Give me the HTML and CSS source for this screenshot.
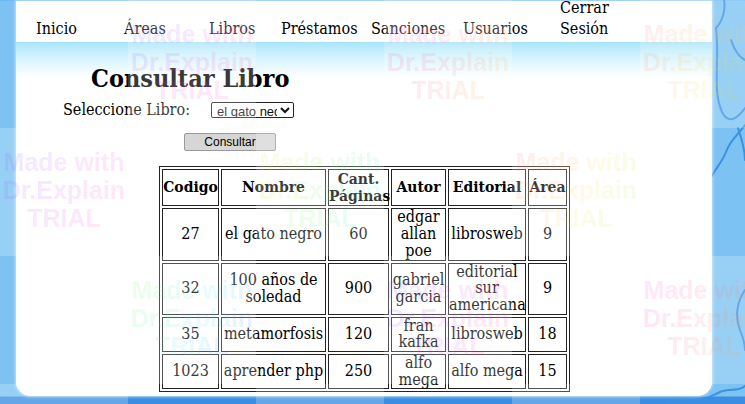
FILE: index.html
```html
<!DOCTYPE html>
<html lang="es">
<head>
<meta charset="utf-8">
<title>Consultar Libro</title>
<link rel="stylesheet" href="styles.css">
</head>
<body>
<svg class="veins" width="745" height="404" viewBox="0 0 745 404" aria-hidden="true">
  <path d="M716 28 C720 60 712 90 722 112 C728 124 736 120 745 108"/>
  <path d="M731 40 C735 52 741 58 745 60"/>
  <path d="M724 0 C726 10 722 22 716 28"/>
  <path d="M745 125 C738 135 730 140 726 152 C722 162 716 168 712 176"/>
  <path d="M738 128 C742 140 745 150 745 160"/>
  <path d="M745 290 C738 300 734 315 740 330 C744 340 745 345 745 350"/>
  <path d="M700 404 C704 398 712 396 720 392 C730 388 738 392 745 386"/>
  <path d="M668 404 C672 400 680 398 688 399"/>
</svg>

<div class="page">
  <nav class="nav">
    <a class="nav-item">Inicio</a>
    <a class="nav-item">Áreas</a>
    <a class="nav-item">Libros</a>
    <a class="nav-item">Préstamos</a>
    <a class="nav-item">Sanciones</a>
    <a class="nav-item">Usuarios</a>
    <a class="nav-item nav-last">Cerrar Sesión</a>
  </nav>

  <main class="content">
    <h1 class="title">Consultar Libro</h1>
    <div class="select-row">
      <label class="select-label">Seleccione Libro:</label>
      <select class="book-select">
        <option>el gato negro</option>
        <option>100 años de soledad</option>
        <option>metamorfosis</option>
        <option>aprender php</option>
      </select>
    </div>
    <div class="button-row">
      <button class="btn">Consultar</button>
    </div>

    <table class="books">
      <colgroup>
        <col class="c-cod"><col class="c-nom"><col class="c-pag"><col class="c-aut"><col class="c-edi"><col class="c-area">
      </colgroup>
      <thead>
        <tr><th>Codigo</th><th>Nombre</th><th>Cant. Páginas</th><th>Autor</th><th>Editorial</th><th>Área</th></tr>
      </thead>
      <tbody>
        <tr><td>27</td><td>el gato negro</td><td>60</td><td>edgar allan poe</td><td>librosweb</td><td>9</td></tr>
        <tr><td>32</td><td>100 años de soledad</td><td>900</td><td>gabriel garcia</td><td>editorial sur americana</td><td>9</td></tr>
        <tr><td>35</td><td>metamorfosis</td><td>120</td><td>fran kafka</td><td>librosweb</td><td>18</td></tr>
        <tr><td>1023</td><td>aprender php</td><td>250</td><td>alfo mega</td><td>alfo mega</td><td>15</td></tr>
      </tbody>
    </table>
  </main>
</div>

<div class="wm t-1-0 h1"><span>Made with<br>Dr.Explain<br>TRIAL</span></div>
<div class="wm t-3-0 h2"><span>Made with<br>Dr.Explain<br>TRIAL</span></div>
<div class="wm t-5-0 h3"><span>Made with<br>Dr.Explain<br>TRIAL</span></div>
<div class="wm t-0-1 h1"><span>Made with<br>Dr.Explain<br>TRIAL</span></div>
<div class="wm t-2-1 h4"><span>Made with<br>Dr.Explain<br>TRIAL</span></div>
<div class="wm t-4-1 h3"><span>Made with<br>Dr.Explain<br>TRIAL</span></div>
<div class="wm t-1-2 h5"><span>Made with<br>Dr.Explain<br>TRIAL</span></div>
<div class="wm t-3-2 h1"><span>Made with<br>Dr.Explain<br>TRIAL</span></div>
<div class="wm t-5-2 h2"><span>Made with<br>Dr.Explain<br>TRIAL</span></div>
<div class="wm t-0-3 h1"><span>Made with<br>Dr.Explain<br>TRIAL</span></div>
<div class="wm t-2-3 h2"><span>Made with<br>Dr.Explain<br>TRIAL</span></div>
<div class="wm t-4-3 h3"><span>Made with<br>Dr.Explain<br>TRIAL</span></div>
</body>
</html>
```

FILE: styles.css
```css
* { box-sizing: border-box; }

html, body {
  margin: 0;
  height: 404px;
  overflow: hidden;
}

body {
  position: relative;
  background: linear-gradient(to bottom, #5db3f0 0, #7cc2f2 1px, #7cc2f2 396px, #3a8de2 397px);
  font-family: "DejaVu Serif", "Liberation Serif", serif;
  font-stretch: condensed;
  color: #000;
  padding-top: 1px;
}

.veins {
  position: absolute;
  left: 0;
  top: 0;
}
.veins path {
  fill: none;
  stroke: #3a90e2;
  stroke-width: 2;
  stroke-linecap: round;
}

.page {
  position: relative;
  margin-left: 16px;
  width: 696px;
  height: 395px;
  background: #fff;
  border-radius: 0 0 15px 15px;
  box-shadow: 0 0 3px 1px rgba(220, 240, 255, 0.7);
  overflow: hidden;
}

.nav {
  height: 41px;
  background: #fff;
  display: grid;
  grid-template-columns: 88px 85px 72px 90px 92px 97px 60px;
  grid-template-rows: 39px;
  align-items: end;
  padding-left: 20px;
  font-size: 16px;
  line-height: 21.7px;
}

.nav-item {
  color: #000;
  text-decoration: none;
  white-space: nowrap;
}
.nav-last {
  white-space: normal;
}

.content {
  background: linear-gradient(to bottom, #a6e4fb 0, #cdf1fd 12px, #ffffff 36px);
  height: 354px;
  padding-top: 23px;
}

.title {
  margin: 0;
  padding-left: 75px;
  font-size: 25px;
  line-height: 28px;
  font-weight: bold;
}

.select-row {
  display: flex;
  align-items: center;
  margin-top: 7px;
  padding-left: 47px;
  height: 20px;
}

.select-label {
  width: 148px;
  font-size: 16px;
  line-height: 20px;
}

.book-select {
  width: 83px;
  height: 16px;
  padding: 0 0 0 1px;
  font-family: "Liberation Sans", Arial, sans-serif;
  font-stretch: normal;
  font-size: 13px;
  border: 1px solid #222;
  border-radius: 2px;
  background: #fff;
  color: #111;
}

.button-row {
  margin-top: 13px;
  padding-left: 168px;
}

.btn {
  display: block;
  width: 92px;
  height: 18px;
  padding: 0;
  font-family: "Liberation Sans", Arial, sans-serif;
  font-stretch: normal;
  font-size: 12px;
  background: #d6d6d6;
  border: 1px solid #9a9a9a;
  border-radius: 2px;
  color: #000;
}

.books {
  margin-top: 15px;
  margin-left: 143px;
  table-layout: fixed;
  width: 411px;
  border: 1px solid #222;
  border-spacing: 2px;
  font-size: 16px;
  line-height: 16.7px;
}

.books th, .books td {
  border: 1px solid #222;
  padding: 0;
  text-align: center;
  vertical-align: middle;
}

.books th {
  font-weight: bold;
  font-size: 15.5px;
  padding: 1px 0;
}

.c-cod { width: 57px; }
.c-nom { width: 105px; }
.c-pag { width: 61px; }
.c-aut { width: 55px; }
.c-edi { width: 78px; }
.c-area { width: 39px; }

/* Dr.Explain trial watermark tiles */
.wm {
  position: absolute;
  width: 128px;
  height: 128px;
  padding-top: 20px;
  text-align: center;
  background: rgba(255, 255, 255, 0.22);
  backdrop-filter: blur(0.5px);
  -webkit-backdrop-filter: blur(0.5px);
}

.wm span {
  display: inline-block;
  font-family: "Liberation Sans", Arial, sans-serif;
  font-stretch: normal;
  font-weight: bold;
  font-size: 25px;
  line-height: 28px;
  color: transparent;
  -webkit-background-clip: text;
  background-clip: text;
  background-size: 300% 300%;
  background-image: linear-gradient(120deg, #5a5cff, #d040ff, #ff40b0, #ff8a50, #f0e040, #60f060, #40d8ff, #5a5cff);
  opacity: 0.12;
}

.h1 span { background-position: 0% 0%; }
.h2 span { background-position: 30% 30%; }
.h3 span { background-position: 55% 55%; }
.h4 span { background-position: 80% 80%; }
.h5 span { background-position: 100% 100%; }

.t-1-0 { left: 128px; top: 0; }
.t-3-0 { left: 384px; top: 0; }
.t-5-0 { left: 640px; top: 0; }
.t-0-1 { left: 0; top: 128px; }
.t-2-1 { left: 256px; top: 128px; }
.t-4-1 { left: 512px; top: 128px; }
.t-1-2 { left: 128px; top: 256px; }
.t-3-2 { left: 384px; top: 256px; }
.t-5-2 { left: 640px; top: 256px; }
.t-0-3 { left: 0; top: 384px; }
.t-2-3 { left: 256px; top: 384px; }
.t-4-3 { left: 512px; top: 384px; }
```
